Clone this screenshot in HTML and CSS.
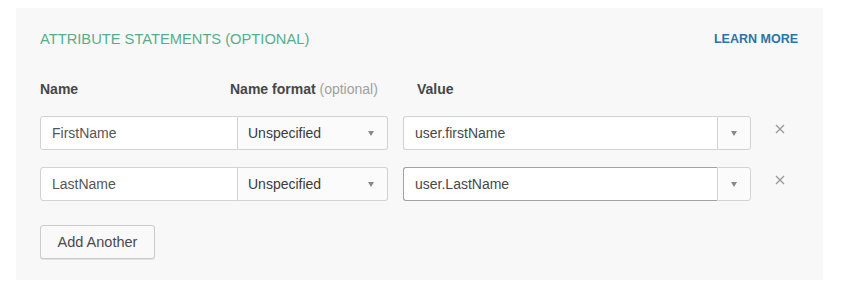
FILE: index.html
```html
<!DOCTYPE html>
<html>
<head>
    <title>Attribute Statements</title>
    <link rel="stylesheet" href="styles.css">
</head>
<body>
    <div class="panel">
        <div class="panel-head">
            <h2 class="title">ATTRIBUTE STATEMENTS (OPTIONAL)</h2>
            <a class="learn" href="#">LEARN MORE</a>
        </div>

        <!-- Column labels -->
        <div class="row labels">
            <div class="col-name">Name</div>
            <div class="col-format">Name format <span class="hint">(optional)</span></div>
            <div class="col-value">Value</div>
        </div>

        <!-- Statements -->
        <div class="row stmt">
            <div class="pair">
                <div class="field name">FirstName</div>
                <div class="select">Unspecified <span class="caret"></span></div>
            </div>
            <div class="combo">
                <div class="field value">user.firstName</div>
                <div class="combo-btn"><span class="caret"></span></div>
            </div>
            <span class="remove">
                <svg width="10" height="10" viewBox="0 0 10 10"><path d="M1 1L9 9M9 1L1 9" stroke="#9a9a9a" stroke-width="1.3"/></svg>
            </span>
        </div>

        <div class="row stmt">
            <div class="pair">
                <div class="field name">LastName</div>
                <div class="select">Unspecified <span class="caret"></span></div>
            </div>
            <div class="combo">
                <div class="field value focus">user.LastName</div>
                <div class="combo-btn"><span class="caret"></span></div>
            </div>
            <span class="remove">
                <svg width="10" height="10" viewBox="0 0 10 10"><path d="M1 1L9 9M9 1L1 9" stroke="#9a9a9a" stroke-width="1.3"/></svg>
            </span>
        </div>

        <button class="btn">Add Another</button>
    </div>
</body>
</html>
```

FILE: styles.css
```css
body { margin: 0; background: #fff; font-family: "Liberation Sans", Arial, sans-serif; font-size: 14px; color: #333; }
.panel { box-sizing: border-box; width: 807px; height: 272px; margin: 8px 0 0 16px; padding: 22px 25px 0 24px; background: #f8f8f8; }
.panel-head { display: flex; justify-content: space-between; align-items: center; height: 18px; }
.title { margin: 0; font-size: 14.7px; font-weight: normal; color: #56ad8d; line-height: 18px; }
.learn { font-size: 12.5px; font-weight: bold; color: #2a74aa; text-decoration: none; }
.row { display: flex; align-items: center; }
.labels { margin-top: 32px; height: 18px; font-weight: bold; color: #474747; }
.col-name { width: 190px; }
.col-format { width: 187px; }
.hint { font-weight: normal; color: #a0a0a0; }
.stmt { margin-top: 18px; height: 34px; }
.stmt + .stmt { margin-top: 17px; }
.pair { display: flex; height: 34px; }
.field { box-sizing: border-box; height: 34px; padding: 0 11px; line-height: 32px; background: #fff; border: 1px solid #d2d2d2; color: #555; }
.name { width: 198px; border-radius: 3px 0 0 3px; }
.select { box-sizing: border-box; width: 150px; height: 34px; padding: 0 10px; line-height: 32px; border: 1px solid #d2d2d2; border-left: none; border-radius: 0 3px 3px 0; background: #fbfbfb; color: #3a3a3a; display: flex; justify-content: space-between; align-items: center; }
.caret { width: 0; height: 0; border-left: 3.5px solid transparent; border-right: 3.5px solid transparent; border-top: 5px solid #888; }
.select .caret { margin-right: 3px; }
.combo { display: flex; margin-left: 15px; width: 348px; height: 34px; }
.value { flex: 1; border-right: none; border-radius: 3px 0 0 3px; color: #484848; }
.value.focus { border-color: #a2a2a2; }
.combo-btn { box-sizing: border-box; width: 34px; height: 34px; display: flex; justify-content: center; align-items: center; background: #fbfbfb; border: 1px solid #d2d2d2; border-radius: 0 3px 3px 0; }
.remove { margin-left: 24px; margin-top: -8px; display: flex; }
.btn { margin-top: 24px; box-sizing: border-box; width: 115px; height: 34px; font-family: inherit; font-size: 14.5px; color: #4a4a4a; background: #f9f9f9; border: 1px solid #cbcbcb; border-radius: 3px; box-shadow: 0 1px 0 #e2e2e2; cursor: pointer; }
```
